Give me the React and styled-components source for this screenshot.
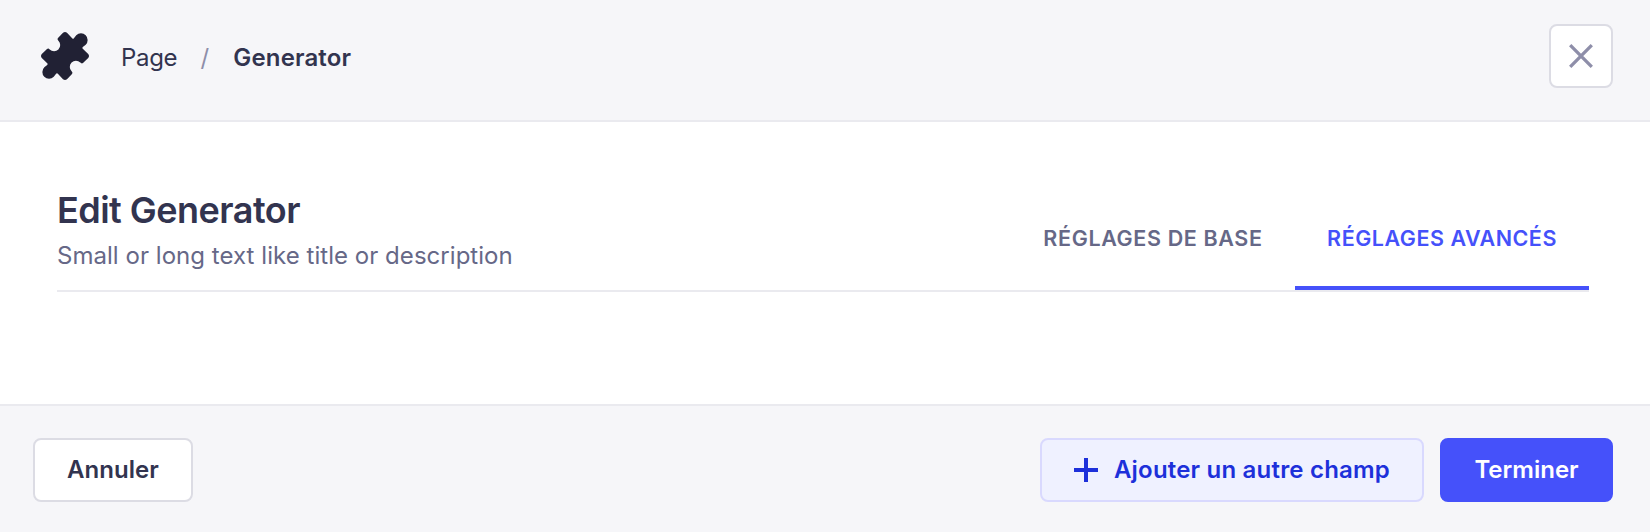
import React from "react";
import styled, { createGlobalStyle } from "styled-components";

const GlobalStyle = createGlobalStyle`
  *, *::before, *::after { box-sizing: border-box; }
  body {
    margin: 0;
    background: #ffffff;
    font-family: Inter, "Liberation Sans", sans-serif;
    color: #32344f;
    -webkit-font-smoothing: antialiased;
  }
`;

const Modal = styled.div`
  display: flex;
  flex-direction: column;
  height: 532px;
  background: #ffffff;
`;

const Header = styled.header`
  display: flex;
  align-items: flex-start;
  justify-content: space-between;
  height: 122px;
  padding: 24px 37px 0 41px;
  background: #f6f6f9;
  border-bottom: 2px solid #eaeaef;
`;

const Breadcrumbs = styled.nav`
  display: flex;
  align-items: center;
  height: 64px;
`;

const PuzzleIcon = styled.svg`
  width: 48px;
  height: 48px;
  margin-right: 32px;
`;

const Crumb = styled.span`
  font-size: 24px;
  line-height: 32px;
  padding-top: 4px;
  font-weight: ${(p) => (p.$current ? 600 : 400)};
  letter-spacing: ${(p) => (p.$current ? "0.15px" : "-0.3px")};
  color: #32344f;
`;

const Divider = styled.span`
  width: 56px;
  padding: 4px 1px 0 0;
  text-align: center;
  font-size: 24px;
  line-height: 32px;
  color: #8e8ea9;
`;

const CloseButton = styled.button`
  display: flex;
  align-items: center;
  justify-content: center;
  width: 64px;
  height: 64px;
  padding: 0;
  background: #ffffff;
  border: 2px solid #dcdce4;
  border-radius: 8px;
`;

const Body = styled.main`
  flex: 1;
  padding: 64px 61px 0 57px;
`;

const TitleRow = styled.div`
  display: flex;
  justify-content: space-between;
  height: 106px;
  border-bottom: 2px solid #eaeaef;
`;

const Heading = styled.div`
  display: flex;
  flex-direction: column;
`;

const Title = styled.h2`
  margin: 2px 0 0;
  font-size: 36px;
  line-height: 44px;
  font-weight: 600;
  letter-spacing: -0.52px;
  color: #32344f;
`;

const Subtitle = styled.p`
  margin: 8px 0 0;
  font-size: 24px;
  line-height: 32px;
  letter-spacing: 0.04px;
  color: #666887;
`;

const Tabs = styled.div`
  display: flex;
`;

const Tab = styled.button`
  height: 104px;
  width: ${(p) => p.$width}px;
  padding: 3px 0 0;
  border: 0;
  border-bottom: 4px solid ${(p) => (p.$active ? "#4551fa" : "transparent")};
  background: none;
  font-family: inherit;
  font-size: 21.5px;
  line-height: 28px;
  font-weight: 600;
  letter-spacing: ${(p) => (p.$active ? 0.52 : 0.63)}px;
  text-transform: uppercase;
  white-space: nowrap;
  color: ${(p) => (p.$active ? "#4551fa" : "#666887")};
`;

const Footer = styled.footer`
  display: flex;
  align-items: flex-start;
  justify-content: space-between;
  height: 128px;
  padding: 32px 37px 0 33px;
  background: #f6f6f9;
  border-top: 2px solid #eaeaef;
`;

const Actions = styled.div`
  display: flex;
  gap: 16px;
`;

const variants = {
  tertiary: { bg: "#ffffff", border: "#dcdce4", text: "#32344f", spacing: "0.05px" },
  secondary: { bg: "#eff1ff", border: "#d9d9fe", text: "#1d30da", spacing: "0.2px" },
  primary: { bg: "#4551fa", border: "#4551fa", text: "#ffffff", spacing: "0" },
};

const Button = styled.button`
  display: flex;
  align-items: center;
  justify-content: center;
  gap: 16px;
  width: ${(p) => p.$width}px;
  height: 64px;
  padding: 0;
  border: 2px solid ${(p) => variants[p.$variant].border};
  border-radius: 8px;
  background: ${(p) => variants[p.$variant].bg};
  color: ${(p) => variants[p.$variant].text};
  font-family: inherit;
  font-size: 24px;
  line-height: 32px;
  font-weight: 600;
  letter-spacing: ${(p) => variants[p.$variant].spacing};
  white-space: nowrap;
`;

export default function App() {
  return (
    <>
      <GlobalStyle />
      <Modal>
        <Header>
          <Breadcrumbs>
            <PuzzleIcon viewBox="0 0 48 48" fill="#212134">
              <path d="M22 .8Q24 -.8 26 .8L31.4 6.4Q32.2 7.1 32.9 6.2L35.25 3.3A6.68 6.68 0 0 1 44.7 12.75L41.8 15.1Q41 16 41.8 16.7L47.2 22Q48.8 24 47.2 26L42 31Q40.6 32 39.3 30.6A6.1 6.1 0 1 0 30.6 39.3Q32 40.6 31 42L26 47.2Q24 48.8 22 47.2L16.6 41.6Q15.8 40.9 15.1 41.8L12.75 44.7A6.68 6.68 0 0 1 3.3 35.25L6.2 32.9Q7 32 6.2 31.3L.8 26Q-.8 24 .8 22L6 17Q7.4 16 8.7 17.4A6.1 6.1 0 1 0 17.4 8.7Q16 7.4 17 6Z" />
            </PuzzleIcon>
            <Crumb>Page</Crumb>
            <Divider>/</Divider>
            <Crumb $current>Generator</Crumb>
          </Breadcrumbs>
          <CloseButton aria-label="Fermer">
            <svg width="24" height="24" viewBox="0 0 24 24" stroke="#8e8ea9" strokeWidth="3.3">
              <path d="M1.2 1.2L22.8 22.8M22.8 1.2L1.2 22.8" />
            </svg>
          </CloseButton>
        </Header>
        <Body>
          <TitleRow>
            <Heading>
              <Title>Edit Generator</Title>
              <Subtitle>Small or long text like title or description</Subtitle>
            </Heading>
            <Tabs>
              <Tab $width={284}>Réglages de base</Tab>
              <Tab $width={294} $active>Réglages avancés</Tab>
            </Tabs>
          </TitleRow>
        </Body>
        <Footer>
          <Button $variant="tertiary" $width={160}>Annuler</Button>
          <Actions>
            <Button $variant="secondary" $width={384}>
              <svg width="24" height="24" viewBox="0 0 24 24" fill="currentColor">
                <path d="M10 0h4v10h10v4H14v10h-4V14H0v-4h10z" />
              </svg>
              <span>Ajouter un autre champ</span>
            </Button>
            <Button $variant="primary" $width={173}>Terminer</Button>
          </Actions>
        </Footer>
      </Modal>
    </>
  );
}
